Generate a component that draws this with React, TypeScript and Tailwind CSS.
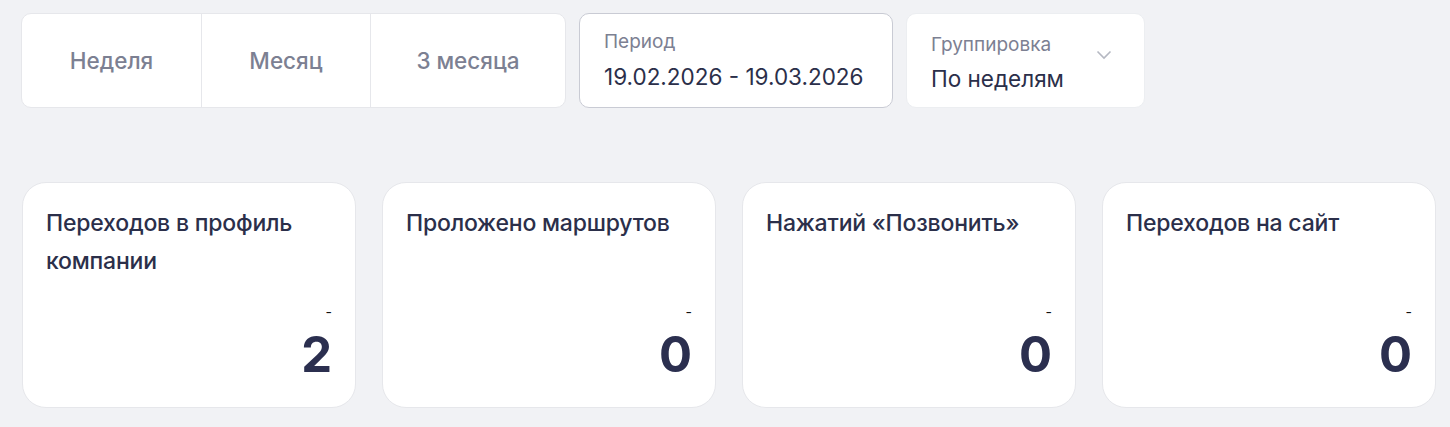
import React from "react";

const font = { fontFamily: "Inter, 'Noto Sans', sans-serif" };

function Card({ title, value }: { title: string; value: string }) {
  return (
    <div className="flex h-[226px] w-[334px] flex-col rounded-[24px] border border-[#e6e7eb] bg-white px-[23px] pt-[21px] pb-[23px]">
      <div className="text-[23px] leading-[38px] font-medium tracking-[-0.2px] text-[#2b2f4a]">{title}</div>
      <div className="mt-auto flex flex-col items-end">
        <div className="text-[14px] leading-[17px] text-[#111111]">-</div>
        <div className="mt-[5px] text-[49px] leading-[59px] font-bold text-[#2b2f4f]">{value}</div>
      </div>
    </div>
  );
}

export default function App() {
  return (
    <div className="min-h-[427px] bg-[#f1f2f5] pl-[21px] pt-[13px]" style={font}>
      <div className="flex items-stretch gap-[13px]">
        <div className="flex h-[95px] w-[545px] rounded-[10px] border border-[#e6e7eb] bg-white text-[22.5px] font-medium text-[#7c8092]">
          <div className="flex w-[180px] items-center justify-center border-r border-[#e6e7eb]">Неделя</div>
          <div className="flex w-[169px] items-center justify-center border-r border-[#e6e7eb]">Месяц</div>
          <div className="flex flex-1 items-center justify-center">3 месяца</div>
        </div>
        <div className="flex h-[95px] w-[314px] flex-col justify-center rounded-[10px] border border-[#c9cbd4] bg-white pl-[24px]">
          <div className="text-[19px] leading-[22px] text-[#7c8092]">Период</div>
          <div className="mt-[10px] text-[22.5px] leading-[28px] text-[#2b2f4a]">19.02.2026 - 19.03.2026</div>
        </div>
        <div className="flex h-[95px] w-[239px] items-center justify-between rounded-[10px] border border-[#eceef1] bg-white pl-[24px] pr-[32px]">
          <div className="flex flex-col pt-[5px]">
            <div className="text-[19px] leading-[22px] text-[#7c8092]">Группировка</div>
            <div className="mt-[9px] text-[22.5px] leading-[28px] text-[#2b2f4a]">По неделям</div>
          </div>
          <svg width="16" height="10" viewBox="0 0 16 10" className="mb-[12px]">
            <path d="M1.5 1.5 L8 8 L14.5 1.5" fill="none" stroke="#b5b8c2" strokeWidth="1.6" />
          </svg>
        </div>
      </div>
      <div className="mt-[74px] flex gap-[26px] pl-[1px]">
        <Card title="Переходов в профиль компании" value="2" />
        <Card title="Проложено маршрутов" value="0" />
        <Card title="Нажатий «Позвонить»" value="0" />
        <Card title="Переходов на сайт" value="0" />
      </div>
    </div>
  );
}
